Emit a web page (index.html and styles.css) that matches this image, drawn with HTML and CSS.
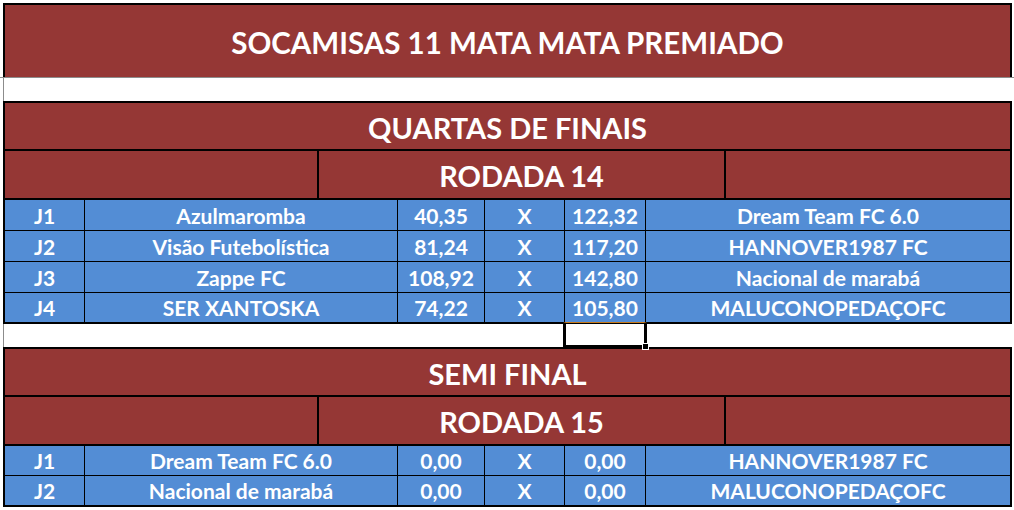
FILE: index.html
```html
<!DOCTYPE html>
<html lang="pt">
<head>
<meta charset="utf-8">
<title>SOCAMISAS 11 MATA MATA PREMIADO</title>
<link rel="stylesheet" href="styles.css">
</head>
<body>
<div class="sheet">
  <div class="title">SOCAMISAS 11 MATA MATA PREMIADO</div>
  <div class="gap gap-first"></div>

  <section class="block">
    <div class="band band-phase">QUARTAS DE FINAIS</div>
    <div class="band band-round">
      <div class="side side-left"></div>
      <div class="mid">RODADA 14</div>
      <div class="side"></div>
    </div>
    <div class="row">
      <div class="cell">J1</div><div class="cell">Azulmaromba</div><div class="cell">40,35</div><div class="cell">X</div><div class="cell">122,32</div><div class="cell">Dream Team FC 6.0</div>
    </div>
    <div class="row">
      <div class="cell">J2</div><div class="cell">Visão Futebolística</div><div class="cell">81,24</div><div class="cell">X</div><div class="cell">117,20</div><div class="cell">HANNOVER1987 FC</div>
    </div>
    <div class="row">
      <div class="cell">J3</div><div class="cell">Zappe FC</div><div class="cell">108,92</div><div class="cell">X</div><div class="cell">142,80</div><div class="cell">Nacional de marabá</div>
    </div>
    <div class="row row-last row-tall">
      <div class="cell">J4</div><div class="cell">SER XANTOSKA</div><div class="cell">74,22</div><div class="cell">X</div><div class="cell">105,80</div><div class="cell">MALUCONOPEDAÇOFC</div>
    </div>
  </section>

  <div class="gap gap-second">
    <div class="selection"><span class="handle"></span></div>
  </div>

  <section class="block">
    <div class="band band-phase">SEMI FINAL</div>
    <div class="band band-round">
      <div class="side side-left"></div>
      <div class="mid">RODADA 15</div>
      <div class="side"></div>
    </div>
    <div class="row row-short">
      <div class="cell">J1</div><div class="cell">Dream Team FC 6.0</div><div class="cell">0,00</div><div class="cell">X</div><div class="cell">0,00</div><div class="cell">HANNOVER1987 FC</div>
    </div>
    <div class="row row-last">
      <div class="cell">J2</div><div class="cell">Nacional de marabá</div><div class="cell">0,00</div><div class="cell">X</div><div class="cell">0,00</div><div class="cell">MALUCONOPEDAÇOFC</div>
    </div>
  </section>
</div>
</body>
</html>
```

FILE: styles.css
```css
* {
  box-sizing: border-box;
}

html, body {
  margin: 0;
  padding: 0;
  background: #ffffff;
}

body {
  width: 1014px;
  height: 510px;
  overflow: hidden;
  font-family: "Lato", "Open Sans", "Liberation Sans", sans-serif;
  font-weight: 700;
  color: #ffffff;
}

.sheet {
  padding-top: 3px;
}

.title {
  margin-left: 3px;
  width: 1009px;
  height: 74px;
  border: 2px solid #000;
  border-bottom: none;
  background: #953735;
  display: flex;
  align-items: center;
  justify-content: center;
  font-size: 29.5px;
  padding-top: 2px;
}

.gap {
  position: relative;
  width: 1014px;
  background: linear-gradient(to right, transparent 3px, #8c8c8c 3px, #8c8c8c 4px, transparent 4px);
}

.gap-first {
  height: 24px;
  border-top: 1px solid #8c8c8c;
}

.gap-second {
  height: 23px;
}

.block {
  margin-left: 3px;
  width: 1009px;
  border: 2px solid #000;
}

.band {
  background: #953735;
  border-bottom: 2px solid #000;
  font-size: 29px;
}

.band-phase {
  height: 48px;
  display: flex;
  align-items: center;
  justify-content: center;
  padding-top: 2px;
}

.band-round {
  height: 49px;
  display: grid;
  grid-template-columns: 314px 407px 284px;
}

.side-left,
.mid {
  border-right: 2px solid #000;
}

.mid {
  display: flex;
  align-items: center;
  justify-content: center;
  padding-top: 2px;
}

.row {
  display: grid;
  grid-template-columns: 80px 313px 87px 80px 81px 364px;
  height: 31px;
  background: #538dd5;
  border-bottom: 1px solid #000;
  font-size: 21px;
}

.row-short {
  height: 30px;
}

.row-last {
  border-bottom: none;
  height: 29px;
}

.cell {
  display: flex;
  align-items: center;
  justify-content: center;
  border-right: 1px solid #000;
  white-space: nowrap;
}

.cell:last-child {
  border-right: none;
}

.selection {
  position: absolute;
  left: 563px;
  top: -2px;
  width: 84px;
  height: 26px;
  border: 3px solid #000;
  border-top: 1px solid #c97a1a;
  z-index: 2;
}

.handle {
  position: absolute;
  right: -5px;
  bottom: -5px;
  width: 7px;
  height: 7px;
  background: #000;
  border: 1px solid #fff;
}
```
